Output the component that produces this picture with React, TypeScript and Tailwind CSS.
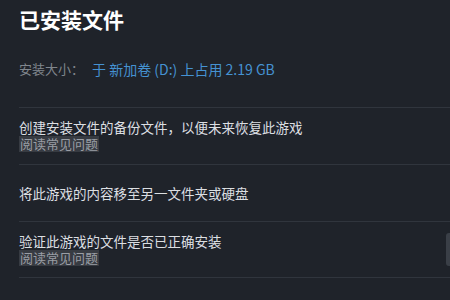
import React from "react";

const font = { fontFamily: '"Noto Sans CJK SC", "Noto Sans", sans-serif' };

function Faq() {
  return (
    <div className="flex">
      <span className="inline-block bg-[#373b42] px-[1px] text-[13px] leading-[16px] text-[#9a9ea5]">阅读常见问题</span>
    </div>
  );
}

export default function App() {
  return (
    <div className="h-[300px] w-[450px] overflow-hidden bg-[#1f232a]" style={font}>
      <div className="pl-[19px] pt-[5px]">
        <div className="text-[21px] font-bold leading-[28px] text-white">已安装文件</div>
        <div className="mt-[27px] flex h-[18px] items-center">
          <span className="text-[13px] leading-[18px] text-[#80868d]">安装大小：</span>
          <span className="ml-[8px] text-[14px] leading-[18px] text-[#4592d2]">于 新加卷 (D:) 上占用 2.19 GB</span>
        </div>
        <div className="mt-[29px] w-[560px] text-[13.5px] text-[#dcdfe2]">
          <div className="flex h-[57px] flex-col justify-center border-t border-[#30353d] pb-[1px]">
            <div className="leading-[17px]">创建安装文件的备份文件，以便未来恢复此游戏</div>
            <Faq />
          </div>
          <div className="flex h-[57px] flex-col justify-center border-t border-[#30353d]">
            <div className="leading-[17px]">将此游戏的内容移至另一文件夹或硬盘</div>
          </div>
          <div className="flex h-[57px] items-center border-y border-[#30353d]">
            <div className="flex w-[427px] shrink-0 flex-col justify-center">
              <div className="leading-[17px]">验证此游戏的文件是否已正确安装</div>
              <Faq />
            </div>
            <div className="h-[33px] w-[100px] shrink-0 rounded-[3px] bg-[#3a3f47]" />
          </div>
        </div>
      </div>
    </div>
  );
}
